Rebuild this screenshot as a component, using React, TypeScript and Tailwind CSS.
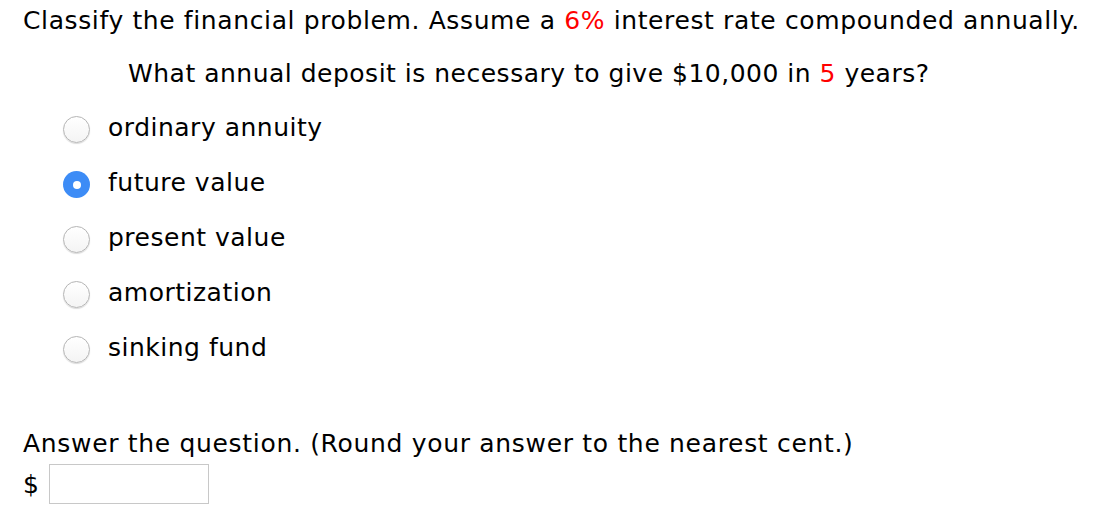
import React from "react";

function Radio({ checked }: { checked?: boolean }) {
  if (checked) {
    return (
      <span className="flex h-[27px] w-[27px] shrink-0 items-center justify-center rounded-full bg-[#3d8cf6]">
        <span className="h-[8px] w-[8px] rounded-full bg-white" />
      </span>
    );
  }
  return (
    <span className="block h-[27px] w-[27px] shrink-0 rounded-full border border-[#b5b5b5] bg-gradient-to-b from-white to-[#f4f4f4] shadow-[0_1px_1px_rgba(0,0,0,0.15)]" />
  );
}

export default function App() {
  const options = [
    { label: "ordinary annuity" },
    { label: "future value", checked: true },
    { label: "present value" },
    { label: "amortization" },
    { label: "sinking fund" },
  ];
  return (
    <div className="h-[516px] w-[1096px] overflow-hidden bg-white text-black font-['DejaVu_Sans',Verdana,sans-serif] text-[25px] leading-none tracking-[0.5px]">
      <div className="whitespace-nowrap pl-[23px] pt-[8px] tracking-[0.62px]">
        Classify the financial problem. Assume a <span className="text-[#ff0000]">6%</span> interest rate compounded annually.
      </div>
      <div className="whitespace-nowrap pl-[128px] pt-[28px]">
        What annual deposit is necessary to give $10,000 in <span className="text-[#ff0000]">5</span> years?
      </div>
      <div className="mt-[30px] flex flex-col gap-[28px] pl-[63px]">
        {options.map((o) => (
          <div key={o.label} className="flex h-[27px] items-center gap-[18px]">
            <Radio checked={o.checked} />
            <span className="-mt-[4px]">{o.label}</span>
          </div>
        ))}
      </div>
      <div className="whitespace-nowrap pl-[23px] pt-[68px] tracking-[0.68px]">
        Answer the question. (Round your answer to the nearest cent.)
      </div>
      <div className="mt-[8px] flex items-center gap-[10px] pl-[23px]">
        <span>$</span>
        <div className="h-[40px] w-[160px] border border-[#c8c8c8] bg-white" />
      </div>
    </div>
  );
}
